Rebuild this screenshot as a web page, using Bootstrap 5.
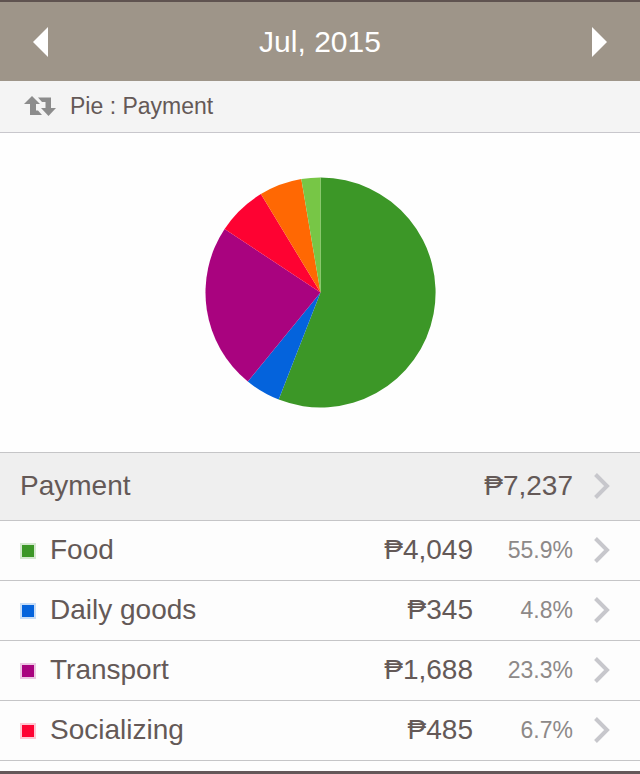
<!DOCTYPE html>
<html lang="en">
<head>
<meta charset="utf-8">
<meta name="viewport" content="width=device-width, initial-scale=1">
<title>Jul, 2015 – Payment</title>
<link href="https://cdn.jsdelivr.net/npm/bootstrap@5.3.0/dist/css/bootstrap.min.css" rel="stylesheet">
<style>
  body { font-family: "Liberation Sans", Arial, sans-serif; font-size: 28px; line-height: 36px; color: #645957; background: #fdfdfd; }
  .month-bar { background: #9e9589; border-top: 2px solid #5f5350; padding: 0 24px; height: 81px; color: #fff; }
  .month-bar h1 { font-size: 30px; line-height: 36px; font-weight: 400; }
  .month-bar .btn { width: 32px; height: 48px; border: 0; border-radius: 0; }
  .mode-bar { background: #f4f4f4; border: 0; border-bottom: 1px solid #c8c7cc; height: 52px; padding: 0 24px 2px; gap: 14px; font-size: 23px; line-height: 28px; color: #645957; }
  .chart-area { background: #fefefe; padding: 44px 0; }
  .report .list-group-item { background: #fdfdfd; color: #645957; height: 60px; padding: 0 30px 2px 20px; border: solid #c5c5c7; border-width: 0 0 1px; }
  .report .total-row { background: #efefef; height: 69px; border-width: 1px 0; }
  .swatch { width: 16px; height: 16px; margin: 2px 14px 0 0; border: 2px solid rgba(255,255,255,.78); }
  .food { background: #3c9727; }
  .daily { background: #0463dc; }
  .transport { background: #a9037f; }
  .social { background: #fe0232; }
  .share { width: 100px; font-size: 23px; line-height: 36px; color: #8d8988; }
  .chevron { margin-left: 21px; }
  .bottom-edge { height: 3px; margin-top: 10px; background: #645759; }
</style>
</head>
<body>
<header class="month-bar d-flex align-items-center justify-content-between">
  <button type="button" class="btn p-0 d-flex align-items-center justify-content-center" aria-label="Previous month">
    <svg width="15" height="30" viewBox="0 0 15 30" aria-hidden="true"><path d="M15 0V30L0 15Z" fill="#fff"/></svg>
  </button>
  <h1 class="m-0">Jul, 2015</h1>
  <button type="button" class="btn p-0 d-flex align-items-center justify-content-center" aria-label="Next month">
    <svg width="15" height="30" viewBox="0 0 15 30" aria-hidden="true"><path d="M0 0V30L15 15Z" fill="#fff"/></svg>
  </button>
</header>
<button type="button" class="mode-bar w-100 d-flex align-items-center">
  <svg width="32" height="20" viewBox="0 0 32 20" fill="#8c8c8c" aria-hidden="true">
    <path d="M8 0L16 8H12V14.500H14L18 19H6V8H0Z"/>
    <path d="M14 1.500H27V12H32L24.500 20L17 12H21.500V6H18Z"/>
  </svg>
  <span>Pie : Payment</span>
</button>
<main>
  <section class="chart-area d-flex justify-content-center">
    <svg width="231" height="231" viewBox="-115.500 -115.500 231 231" role="img" aria-label="Payment by category">
      <path fill="#3c9727" d="M0 0V-115A115 115 0 1 1 -41.800 107.100Z"/>
      <path fill="#0463dc" d="M0 0L-41.800 107.100A115 115 0 0 1 -72.700 89.100Z"/>
      <path fill="#a9037f" d="M0 0L-72.700 89.100A115 115 0 0 1 -95.900 -63.500Z"/>
      <path fill="#fe0232" d="M0 0L-95.900 -63.500A115 115 0 0 1 -59.600 -98.400Z"/>
      <path fill="#ff6803" d="M0 0L-59.600 -98.400A115 115 0 0 1 -19.200 -113.400Z"/>
      <path fill="#77c646" d="M0 0L-19.200 -113.400A115 115 0 0 1 0 -115Z"/>
    </svg>
  </section>
  <nav class="report list-group rounded-0" aria-label="Payment breakdown">
    <a href="#payment" class="total-row list-group-item rounded-0 d-flex align-items-center">
      <span class="flex-grow-1">Payment</span><span>₱7,237</span>
      <svg class="chevron" width="16" height="26" viewBox="0 0 16 26" fill="none" stroke="#c7c7cc" stroke-width="4" aria-hidden="true"><path d="M1.500 1.500L13 13L1.500 24.500"/></svg>
    </a>
    <a href="#food" class="list-group-item d-flex align-items-center">
      <span class="swatch food"></span><span class="flex-grow-1">Food</span><span>₱4,049</span><span class="share text-end">55.9%</span>
      <svg class="chevron" width="16" height="26" viewBox="0 0 16 26" fill="none" stroke="#c7c7cc" stroke-width="4" aria-hidden="true"><path d="M1.500 1.500L13 13L1.500 24.500"/></svg>
    </a>
    <a href="#daily-goods" class="list-group-item d-flex align-items-center">
      <span class="swatch daily"></span><span class="flex-grow-1">Daily goods</span><span>₱345</span><span class="share text-end">4.8%</span>
      <svg class="chevron" width="16" height="26" viewBox="0 0 16 26" fill="none" stroke="#c7c7cc" stroke-width="4" aria-hidden="true"><path d="M1.500 1.500L13 13L1.500 24.500"/></svg>
    </a>
    <a href="#transport" class="list-group-item d-flex align-items-center">
      <span class="swatch transport"></span><span class="flex-grow-1">Transport</span><span>₱1,688</span><span class="share text-end">23.3%</span>
      <svg class="chevron" width="16" height="26" viewBox="0 0 16 26" fill="none" stroke="#c7c7cc" stroke-width="4" aria-hidden="true"><path d="M1.500 1.500L13 13L1.500 24.500"/></svg>
    </a>
    <a href="#socializing" class="list-group-item rounded-0 d-flex align-items-center">
      <span class="swatch social"></span><span class="flex-grow-1">Socializing</span><span>₱485</span><span class="share text-end">6.7%</span>
      <svg class="chevron" width="16" height="26" viewBox="0 0 16 26" fill="none" stroke="#c7c7cc" stroke-width="4" aria-hidden="true"><path d="M1.500 1.500L13 13L1.500 24.500"/></svg>
    </a>
  </nav>
</main>
<footer class="bottom-edge"></footer>
<script src="https://cdn.jsdelivr.net/npm/bootstrap@5.3.0/dist/js/bootstrap.bundle.min.js"></script>
</body>
</html>
